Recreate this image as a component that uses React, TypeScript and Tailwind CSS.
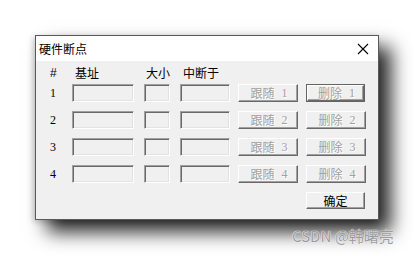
import React from "react";

const font = { fontFamily: '"Noto Sans CJK SC", "Liberation Sans", sans-serif' };

function Input({ w }: { w: string }) {
  return (
    <div
      className={`${w} h-[18px] bg-[#f0f0f0] border border-t-[#a0a0a0] border-l-[#a0a0a0] border-b-white border-r-white shadow-[inset_1px_1px_0_#696969,inset_-1px_-1px_0_#e3e3e3]`}
    />
  );
}

function Btn({ label, n, def }: { label: string; n: number; def?: boolean }) {
  return (
    <div
      className={`h-[18px] flex items-center justify-center bg-[#f0f0f0] ${
        def ? "w-[59px] border border-[#646464] p-0" : "w-[60px]"
      }`}
    >
      <div className="w-full h-full flex items-center justify-center gap-[7px] pl-[2px] border border-t-white border-l-white border-b-[#696969] border-r-[#696969] shadow-[inset_-1px_-1px_0_#a0a0a0]">
        <span
          className="text-[12px] leading-none text-[#a0a0a0] [text-shadow:1px_1px_0_#ffffff]"
          style={font}
        >
          {label}
        </span>
        <span
          className="text-[12px] leading-none text-[#a0a0a0] [text-shadow:1px_1px_0_#ffffff]"
          style={{ fontFamily: '"Liberation Serif", serif' }}
        >
          {n}
        </span>
      </div>
    </div>
  );
}

export default function App() {
  const rows = [1, 2, 3, 4];
  return (
    <div className="relative w-[414px] h-[255px] bg-white overflow-hidden" style={font}>
      <div className="pl-[35px] pt-[35px]">
        <div className="w-[344px] h-[185px] border border-[#5a5a5a] bg-[#f0f0f0] shadow-[12px_12px_18px_rgba(0,0,0,0.85),-2px_2px_6px_rgba(0,0,0,0.2)] flex flex-col">
          <div className="h-[25px] bg-white flex items-center justify-between pl-[3px] pr-[9px]">
            <span className="text-[12px] text-black leading-none">硬件断点</span>
            <svg width="12" height="12" viewBox="0 0 12 12">
              <path d="M1 1 L11 11 M11 1 L1 11" stroke="#000" strokeWidth="1.1" fill="none" />
            </svg>
          </div>
          <div className="flex flex-col pt-[4px]">
            <div className="h-[16px] flex items-center text-[12px] text-black leading-none">
              <span className="ml-[14px] w-[25px]" style={{ fontFamily: '"Liberation Sans", sans-serif' }}>#</span>
              <span className="w-[71px]">基址</span>
              <span className="w-[37px]">大小</span>
              <span>中断于</span>
            </div>
            <div className="mt-[3px] flex flex-col gap-[9px]">
              {rows.map((n) => (
                <div key={n} className="h-[18px] flex items-center">
                  <span
                    className="ml-[14px] w-[22px] text-[12px] text-black leading-none"
                    style={{ fontFamily: '"Liberation Serif", serif' }}
                  >
                    {n}
                  </span>
                  <Input w="w-[62px]" />
                  <div className="w-[10px]" />
                  <Input w="w-[26px]" />
                  <div className="w-[10px]" />
                  <Input w="w-[50px]" />
                  <div className="w-[8px]" />
                  <Btn label="跟随" n={n} />
                  <div className="w-[8px]" />
                  <Btn label="删除" n={n} def={n === 1} />
                </div>
              ))}
            </div>
            <div className="mt-[9px] flex justify-end pr-[13px]">
              <div className="w-[59px] h-[17px] flex items-center justify-center bg-[#f0f0f0] border border-t-white border-l-white border-b-[#696969] border-r-[#696969] shadow-[inset_-1px_-1px_0_#a0a0a0]">
                <span className="text-[12px] leading-none text-black">确定</span>
              </div>
            </div>
          </div>
        </div>
      </div>
      <span
        className="absolute left-[292px] top-[228px] text-[15px] leading-none text-[#9c9c9c] [text-shadow:0_0_1px_#ffffff,0_0_1px_#ffffff]"
        style={font}
      >
        CSDN @韩曙亮
      </span>
    </div>
  );
}
